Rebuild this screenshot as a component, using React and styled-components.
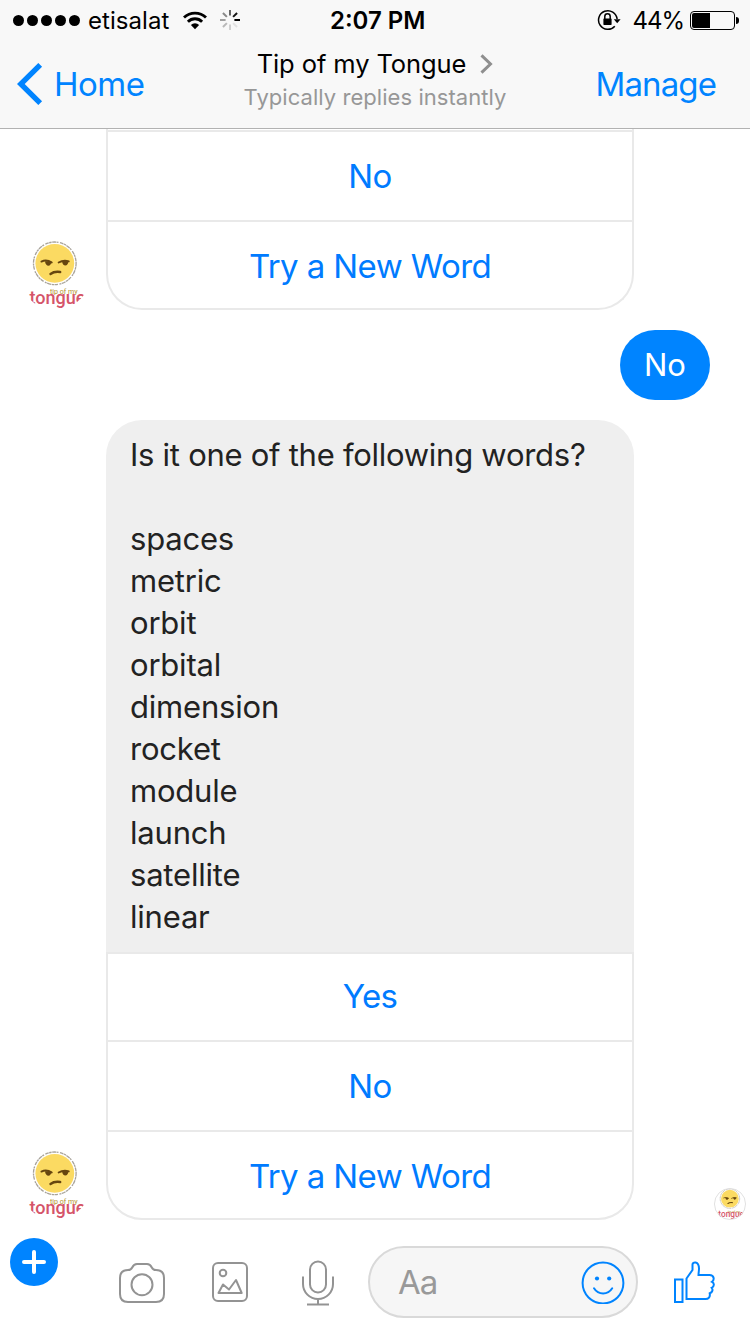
import React from "react";
import styled, { createGlobalStyle } from "styled-components";

const blue = "#0084ff";
const grey = "#939393";

const GlobalStyle = createGlobalStyle`
  * { box-sizing: border-box; }
  body { margin: 0; background: #fff; }
`;

const Screen = styled.main`
  width: 750px;
  height: 1334px;
  display: flex;
  flex-direction: column;
  overflow: hidden;
  background: #fff;
  color: #000;
  font-family: Inter, "Liberation Sans", sans-serif;
`;

const Text = styled.span`
  display: block;
  white-space: nowrap;
  font-size: ${(p) => p.$size}px;
  font-weight: ${(p) => p.$weight || 400};
  letter-spacing: ${(p) => p.$track || 0}px;
  line-height: ${(p) => p.$line || 40}px;
  color: ${(p) => p.$color || "inherit"};
`;

/* ---------- header ---------- */

const Header = styled.header`
  flex: none;
  height: 129px;
  background: #f8f8f8;
  border-bottom: 1px solid #b2b2b2;
`;

const StatusBar = styled.div`
  height: 40px;
  display: grid;
  grid-template-columns: 330px 96px 1fr;
  align-items: center;
`;

const StatusLeft = styled.div`
  display: flex;
  align-items: center;
  padding-left: 13px;
`;

const StatusIcons = styled.div`
  display: flex;
  align-items: center;
  gap: 13px;
  margin-left: 14px;
`;

const StatusRight = styled.div`
  display: flex;
  align-items: center;
  justify-content: flex-end;
  padding-right: 11px;
`;

const Signal = styled.div`
  display: flex;
  gap: 3px;
  margin-right: 8px;
`;

const Dot = styled.i`
  width: 11px;
  height: 11px;
  border-radius: 50%;
  background: #000;
`;

const StatusText = styled(Text)`
  padding-top: 2px;
  line-height: 38px;
`;

const Percent = styled(StatusText)`
  margin-left: 11px;
`;

const Battery = styled.div`
  width: 45px;
  height: 19px;
  margin: 1px 4px 0 6px;
  padding: 1px;
  border: 1px solid #000;
  border-radius: 4px;
  position: relative;
  &::after {
    content: "";
    position: absolute;
    right: -5px;
    top: 5px;
    width: 3px;
    height: 7px;
    border-radius: 0 3px 3px 0;
    background: #000;
  }
`;

const Charge = styled.div`
  width: 44%;
  height: 100%;
  border-radius: 2px 0 0 2px;
  background: #000;
`;

const NavBar = styled.nav`
  height: 88px;
  display: grid;
  grid-template-columns: 200px 1fr 200px;
`;

const NavSide = styled.div`
  display: flex;
  align-items: center;
  justify-content: ${(p) => (p.$end ? "flex-end" : "flex-start")};
  gap: 11px;
  padding: ${(p) => (p.$end ? "0 34px 0 0" : "0 0 0 17px")};
`;

const NavTitle = styled.div`
  display: flex;
  flex-direction: column;
  align-items: center;
  padding-top: 7px;
`;

const TitleLine = styled.div`
  display: flex;
  align-items: center;
  gap: 14px;
`;

/* ---------- thread ---------- */

const Thread = styled.section`
  flex: 1;
  min-height: 0;
  display: flex;
  flex-direction: column;
  justify-content: flex-end;
  gap: 20px;
  overflow: hidden;
`;

const BotRow = styled.div`
  display: flex;
  align-items: flex-end;
  gap: 16px;
  padding: 0 4px 0 20px;
`;

const UserRow = styled.div`
  display: flex;
  justify-content: flex-end;
  padding-right: 40px;
`;

const UserBubble = styled.div`
  width: 90px;
  height: 70px;
  display: flex;
  align-items: center;
  justify-content: center;
  border-radius: 35px;
  background: ${blue};
`;

const Card = styled.div`
  width: 528px;
  flex: none;
`;

const BotBubble = styled.div`
  height: 532px;
  padding: 14px 24px;
  border-radius: 36px 36px 0 0;
  background: #efefef;
`;

const Options = styled.div`
  border: 2px solid #e9e9e9;
  border-top-width: ${(p) => (p.$continued ? 0 : 2)}px;
  padding-top: ${(p) => (p.$continued ? 1 : 0)}px;
  border-radius: 0 0 36px 36px;
`;

const Option = styled.div`
  height: 90px;
  display: flex;
  align-items: center;
  justify-content: center;
  border-top: ${(p) => (p.$first ? 0 : 2)}px solid #e9e9e9;
  ${(p) => p.$first && "height: 86px; padding-bottom: 2px;"}
  ${(p) => p.$last && "height: 88px; padding-top: 2px;"}
`;

const Receipt = styled.div`
  display: flex;
  margin-left: auto;
`;

/* ---------- composer ---------- */

const Composer = styled.footer`
  flex: none;
  height: 114px;
  display: flex;
  align-items: center;
  padding: 10px 35px 0 10px;
`;

const AddButton = styled.div`
  width: 48px;
  height: 48px;
  align-self: flex-start;
  display: flex;
  margin: 8px 61px 0 0;
  border-radius: 50%;
  background: ${blue};
`;

const Tools = styled.div`
  display: flex;
  align-items: center;
  margin-right: 34px;
`;

const Tool = styled.div`
  display: flex;
  margin: ${(p) => p.$drop || 0}px ${(p) => p.$after || 0}px 0 0;
`;

const Input = styled.div`
  width: 270px;
  height: 72px;
  flex: none;
  display: flex;
  align-items: center;
  justify-content: space-between;
  margin-right: 36px;
  padding: 0 11px 0 28px;
  border: 2px solid #d9d9d9;
  border-radius: 36px;
  background: #f6f6f6;
`;

/* ---------- drawings ---------- */

const Wifi = () => (
  <svg width="24" height="19" viewBox="0 0 24 19" fill="none" stroke="#000" strokeWidth="2.8">
    <path d="M1 6.6a15.6 15.6 0 0 1 22 0" />
    <path d="M4.9 10.7a10 10 0 0 1 14.2 0" />
    <path d="M7.9 14a5.8 5.8 0 0 1 8.2 0L12 18.3z" fill="#000" stroke="none" />
  </svg>
);

const spokes = ["#666", "#111", "#000", "#e2e2e2", "#d0d0d0", "#b8b8b8", "#a0a0a0", "#888"];
const Spinner = () => (
  <svg width="20" height="20" viewBox="-10 -10 20 20" strokeWidth="2">
    {spokes.map((c, i) => (
      <line key={i} x1="0" y1="-4.4" x2="0" y2="-10" stroke={c} transform={`rotate(${i * 45})`} />
    ))}
  </svg>
);

const RotationLock = () => (
  <svg width="24" height="22" viewBox="0 0 24 22" fill="none" stroke="#000" strokeWidth="1.5">
    <path d="M17.8 17.2A9.3 9.3 0 1 1 20.1 10" />
    <path d="M16.8 10.2h6.8l-3.4 4z" fill="#000" stroke="none" />
    <rect x="6.4" y="9.5" width="8.2" height="6.4" rx=".6" fill="#000" stroke="none" />
    <path d="M7.8 10V7.5a2.7 2.7 0 0 1 5.4 0V10" />
  </svg>
);

const BackChevron = () => (
  <svg width="26" height="42" viewBox="0 0 26 42" fill="none" stroke={blue} strokeWidth="5.4">
    <path d="M23.2 1.9 3.8 21l19.4 19.1" />
  </svg>
);

const TitleChevron = () => (
  <svg width="13" height="20" viewBox="0 0 13 20" fill="none" stroke="#8f8f8f" strokeWidth="3">
    <path d="M1.5 1.3 10.5 10l-9 8.7" />
  </svg>
);

const Avatar = ({ size, outlined }) => {
  const id = `avatar-${React.useId()}`;
  return (
    <svg width={size} height={size} viewBox="0 0 70 70">
      <clipPath id={id}>
        <circle cx="35" cy="35" r="35" />
      </clipPath>
      <g clipPath={`url(#${id})`}>
        <circle cx="34.8" cy="23.3" r="21.3" fill="none" stroke="#8b8478" strokeWidth="1.3"
          strokeDasharray="3.5 .5 2.4 .6 4 .5 2 1.5" opacity=".75" />
        <circle cx="34.8" cy="23.3" r="19.4" fill="#fbda62" />
        <g fill="none" stroke="#66460f" strokeLinecap="round" strokeWidth="1.8">
          <path d="M21.4 21.6c3-1.5 7-1.3 10.4 1" />
          <path d="M38.6 22.6c3-1.8 7-2.3 10.2-1.2" />
          <path d="M30.5 34c2.2-1.7 6-2.5 9.7-2" strokeWidth="2.4" />
        </g>
        <path d="M25 21.2h6.4c.2 5.8-6 6-6.4 0zM42 21h6.4c.2 5.8-6 6.2-6.4 0z" fill="#66460f" />
        <text x="30" y="53.6" fill="#b3901f" fontFamily="Roboto, sans-serif" fontSize="8"
          fontWeight="400" textLength="27.5" lengthAdjust="spacingAndGlyphs">tip of my</text>
        <text x="9.5" y="63.8" fill="#d55469" fontFamily="Roboto, sans-serif" fontSize="18.6"
          fontWeight="500" textLength="56" lengthAdjust="spacingAndGlyphs">tongue</text>
      </g>
      {outlined && <circle cx="35" cy="35" r="34" fill="none" stroke="#dedede" strokeWidth="2" />}
    </svg>
  );
};

const Plus = () => (
  <svg width="48" height="48" viewBox="0 0 48 48" stroke="#fff" strokeWidth="4" strokeLinecap="round">
    <path d="M24 14v20M14 24h20" />
  </svg>
);

const Camera = () => (
  <svg width="46" height="40" viewBox="0 0 46 40" fill="none" stroke={grey} strokeWidth="2">
    <path d="M9 7c2 0 3.4-.8 4.2-2.5C14.4 2 15.7 1 18 1h10c2.3 0 3.6 1 4.8 3.5C33.6 6.2 35 7 37 7c5 0 8 3 8 8v16c0 5-3 8-8 8H9c-5 0-8-3-8-8V15c0-5 3-8 8-8z" />
    <circle cx="23" cy="21.7" r="10.5" />
  </svg>
);

const Picture = () => (
  <svg width="36" height="40" viewBox="0 0 36 40" fill="none" stroke={grey} strokeWidth="2" strokeLinejoin="round">
    <rect x="1" y="1" width="34" height="38" rx="5" />
    <circle cx="11" cy="11" r="3.3" />
    <path d="M6.5 31 11 22.5l6 5L24 18l5.7 13z" />
  </svg>
);

const Mic = () => (
  <svg width="32" height="46" viewBox="0 0 32 46" fill="none" stroke={grey} strokeWidth="2">
    <rect x="8" y="1.5" width="16" height="31" rx="8" />
    <path d="M1 16.5V24a15 15 0 0 0 30 0v-7.5M16 39v5M5 44.5h22" />
  </svg>
);

const Smile = () => (
  <svg width="44" height="44" viewBox="0 -1 44 44" fill="none" stroke={blue} strokeWidth="2">
    <circle cx="22" cy="22" r="20.4" />
    <circle cx="16" cy="17.5" r="2.1" fill={blue} stroke="none" />
    <circle cx="28.2" cy="17.5" r="2.1" fill={blue} stroke="none" />
    <path d="M13 27.3c4.4 7 13.8 7 18.2 0" strokeLinecap="round" />
  </svg>
);

const Thumb = () => (
  <svg width="41" height="42" viewBox="0 0 41 42" fill="none" stroke={blue} strokeWidth="2">
    <path d="M1 18.5h7.500V41H1z" />
    <path d="M12.5 38V17.5L18.5 9V3.5C18.5 .5 24.8-.2 25 7.5c0 2.500-.5 4-.5 6.500h11c5 0 5 5 2.500 6.800 2.500 1.200 2.500 4.500-.3 6 1.500 1.700.8 4.600-2 5.500C36.500 36 34.500 38 31.500 38z" />
  </svg>
);

const words = ["spaces", "metric", "orbit", "orbital", "dimension", "rocket", "module", "launch", "satellite", "linear"];

const OptionText = ({ children }) => (
  <Text $size={33} $track={-0.6} $color="#007bff">{children}</Text>
);

const BodyText = ({ children, track = -0.2 }) => (
  <Text $size={31} $line={42} $track={track} $color="#222">{children}</Text>
);

export default function App() {
  return (
    <Screen>
      <GlobalStyle />
      <Header>
        <StatusBar>
          <StatusLeft>
            <Signal>{[0, 1, 2, 3, 4].map((n) => <Dot key={n} />)}</Signal>
            <StatusText $size={24} $track={0.05}>etisalat</StatusText>
            <StatusIcons><Wifi /><Spinner /></StatusIcons>
          </StatusLeft>
          <StatusText $size={24} $weight={600}>2:07 PM</StatusText>
          <StatusRight>
            <RotationLock />
            <Percent $size={24} $track={-1}>44%</Percent>
            <Battery><Charge /></Battery>
          </StatusRight>
        </StatusBar>
        <NavBar>
          <NavSide>
            <BackChevron />
            <Text $size={33} $track={-0.5} $color={blue}>Home</Text>
          </NavSide>
          <NavTitle>
            <TitleLine>
              <Text $size={25.5} $line={34} $track={-0.1}>Tip of my Tongue</Text>
              <TitleChevron />
            </TitleLine>
            <Text $size={22} $line={32} $track={0.05} $color="#979797">Typically replies instantly</Text>
          </NavTitle>
          <NavSide $end>
            <Text $size={33} $track={-0.9} $color={blue}>Manage</Text>
          </NavSide>
        </NavBar>
      </Header>

      <Thread>
        <BotRow>
          <Avatar size={70} />
          <Card>
            <Options $continued>
              <Option><OptionText>No</OptionText></Option>
              <Option $last><OptionText>Try a New Word</OptionText></Option>
            </Options>
          </Card>
        </BotRow>
        <UserRow>
          <UserBubble><Text $size={31} $color="#fff">No</Text></UserBubble>
        </UserRow>
        <BotRow>
          <Avatar size={70} />
          <Card>
            <BotBubble>
              <BodyText track={-0.27}>Is it one of the following words?</BodyText>
              <BodyText>&nbsp;</BodyText>
              {words.map((w) => <BodyText key={w}>{w}</BodyText>)}
            </BotBubble>
            <Options>
              <Option $first><OptionText>Yes</OptionText></Option>
              <Option><OptionText>No</OptionText></Option>
              <Option $last><OptionText>Try a New Word</OptionText></Option>
            </Options>
          </Card>
          <Receipt><Avatar size={32} outlined /></Receipt>
        </BotRow>
      </Thread>

      <Composer>
        <AddButton><Plus /></AddButton>
        <Tools>
          <Tool $drop={2} $after={47}><Camera /></Tool>
          <Tool $after={54}><Picture /></Tool>
          <Tool $drop={2}><Mic /></Tool>
        </Tools>
        <Input>
          <Text $size={33} $track={-1} $color="#999">Aa</Text>
          <Smile />
        </Input>
        <Thumb />
      </Composer>
    </Screen>
  );
}
